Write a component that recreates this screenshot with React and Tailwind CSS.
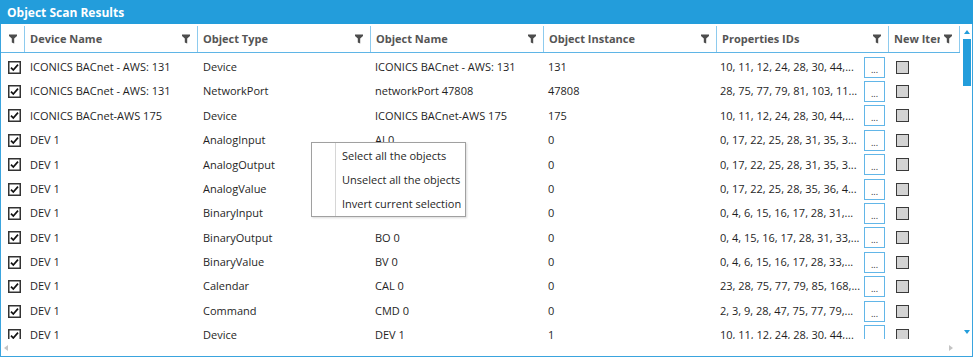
import React from 'react';

const rows = [
  ['ICONICS BACnet - AWS: 131', 'Device', 'ICONICS BACnet - AWS: 131', '131', '10, 11, 12, 24, 28, 30, 44,...'],
  ['ICONICS BACnet - AWS: 131', 'NetworkPort', 'networkPort 47808', '47808', '28, 75, 77, 79, 81, 103, 11...'],
  ['ICONICS BACnet-AWS 175', 'Device', 'ICONICS BACnet-AWS 175', '175', '10, 11, 12, 24, 28, 30, 44,...'],
  ['DEV 1', 'AnalogInput', 'AI 0', '0', '0, 17, 22, 25, 28, 31, 35, 3...'],
  ['DEV 1', 'AnalogOutput', 'AO 0', '0', '0, 17, 22, 25, 28, 31, 35, 3...'],
  ['DEV 1', 'AnalogValue', 'AV 0', '0', '0, 17, 22, 25, 28, 35, 36, 4...'],
  ['DEV 1', 'BinaryInput', 'BI 0', '0', '0, 4, 6, 15, 16, 17, 28, 31,...'],
  ['DEV 1', 'BinaryOutput', 'BO 0', '0', '0, 4, 15, 16, 17, 28, 31, 33,...'],
  ['DEV 1', 'BinaryValue', 'BV 0', '0', '0, 4, 6, 15, 16, 17, 28, 33,...'],
  ['DEV 1', 'Calendar', 'CAL 0', '0', '23, 28, 75, 77, 79, 85, 168,...'],
  ['DEV 1', 'Command', 'CMD 0', '0', '2, 3, 9, 28, 47, 75, 77, 79,...'],
  ['DEV 1', 'Device', 'DEV 1', '1', '10, 11, 12, 24, 28, 30, 44,...'],
];

const cols = 'grid grid-cols-[24px_173px_173px_173px_173px_172px_71px]';

const Filter = () => (
  <svg width="8" height="10" viewBox="0 0 8 10" className="shrink-0">
    <path d="M0 0.5 H8 V2 L5.2 4.6 V9.5 L2.8 8.6 V4.6 L0 2 Z" fill="#4d4d4d" />
  </svg>
);

const HeadCell = ({ label }) => (
  <div className="flex items-center gap-[4px] border-r border-[#8ecbee] pl-[5px] pr-[7px] overflow-hidden">
    <span className="flex-1 min-w-0 font-bold text-[#555] whitespace-nowrap overflow-hidden">{label}</span>
    <Filter />
  </div>
);

const Check = () => (
  <svg width="13" height="13" viewBox="0 0 13 13">
    <rect x="0.75" y="0.75" width="11.5" height="11.5" fill="#fff" stroke="#333" strokeWidth="1.5" />
    <path d="M3 6.6 L5.3 9 L10 3.6" fill="none" stroke="#111" strokeWidth="1.7" />
  </svg>
);

const App = () => {
  return (
    <div className="w-[975px] h-[358px] bg-white relative font-['Open_Sans',sans-serif] text-[11px] text-[#1f1f1f]">
      <div className="w-[973px] h-[357px] flex flex-col border-x border-b border-[#3aa4de]">
        {/* Title */}
        <div className="h-[24px] -mx-px bg-[#239ddb] flex items-center pl-[7px] pt-[2px] shrink-0">
          <span className="text-white font-bold text-[12px]">Object Scan Results</span>
        </div>

        <div className="flex flex-1 min-h-0">
          {/* Grid */}
          <div className="w-[959px] flex flex-col min-h-0">
            <div className={`${cols} h-[29px] pt-[2px] border-b border-[#5fb5e6] shrink-0`}>
              <div className="flex items-center justify-center border-r border-[#8ecbee]">
                <Filter />
              </div>
              <HeadCell label="Device Name" />
              <HeadCell label="Object Type" />
              <HeadCell label="Object Name" />
              <HeadCell label="Object Instance" />
              <HeadCell label="Properties IDs" />
              <HeadCell label="New Items" />
            </div>

            <div className="flex-1 overflow-hidden pt-[2px]">
              {rows.map((r, i) => (
                <div key={i} className={`${cols} h-[24.4px] items-center`}>
                  <div className="flex justify-end pr-[4px]">
                    <Check />
                  </div>
                  <div className="pl-[5px] whitespace-nowrap">{r[0]}</div>
                  <div className="pl-[5px] whitespace-nowrap">{r[1]}</div>
                  <div className="pl-[4px] whitespace-nowrap">{r[2]}</div>
                  <div className="pl-[4px] whitespace-nowrap">{r[3]}</div>
                  <div className="flex items-center justify-between pl-[3px] pr-[4px]">
                    <span className="whitespace-nowrap overflow-hidden">{r[4]}</span>
                    <div className="w-[21px] h-[21px] border border-[#62b6e8] flex items-end justify-center pb-[3px] shrink-0 text-[9px] leading-none">
                      ...
                    </div>
                  </div>
                  <div className="pl-[7px]">
                    <div className="w-[13px] h-[13px] bg-[#d3d3d3] border-[1.5px] border-[#3a3a3a]" />
                  </div>
                </div>
              ))}
            </div>
          </div>

          {/* Vertical scrollbar */}
          <div className="w-[12px] flex flex-col items-center pt-[6px] pb-[5px]">
            <svg width="6" height="4" viewBox="0 0 6 4" className="ml-[1px]">
              <path d="M0 4 L3 0 L6 4 Z" fill="#239ddb" />
            </svg>
            <div className="w-[8px] h-[47px] bg-[#239ddb] mt-[5px] ml-[1px]" />
            <div className="flex-1" />
            <svg width="6" height="4" viewBox="0 0 6 4" className="ml-[1px]">
              <path d="M0 0 L6 0 L3 4 Z" fill="#239ddb" />
            </svg>
          </div>
        </div>

        {/* Horizontal scrollbar */}
        <div className="h-[17px] flex items-center justify-between pl-[3px] pr-[19px] shrink-0">
          <svg width="4" height="6" viewBox="0 0 4 6">
            <path d="M4 0 L0 3 L4 6 Z" fill="#c4c4c4" />
          </svg>
          <svg width="4" height="6" viewBox="0 0 4 6">
            <path d="M0 0 L4 3 L0 6 Z" fill="#c4c4c4" />
          </svg>
        </div>
      </div>

      {/* Context menu */}
      <div className="absolute left-[311px] top-[142px] w-[155px] h-[75px] bg-white border border-[#a0a0a0] shadow-[1px_1px_2px_rgba(0,0,0,0.15)] flex whitespace-nowrap">
        <div className="w-[24px] shrink-0 border-r border-[#d6d6d6]" />
        <div className="flex flex-col pl-[6px] pt-[1px]">
          <div className="h-[24.5px] flex items-center">Select all the objects</div>
          <div className="h-[24.5px] flex items-center">Unselect all the objects</div>
          <div className="h-[24.5px] flex items-center">Invert current selection</div>
        </div>
      </div>
    </div>
  );
};

export default App;
